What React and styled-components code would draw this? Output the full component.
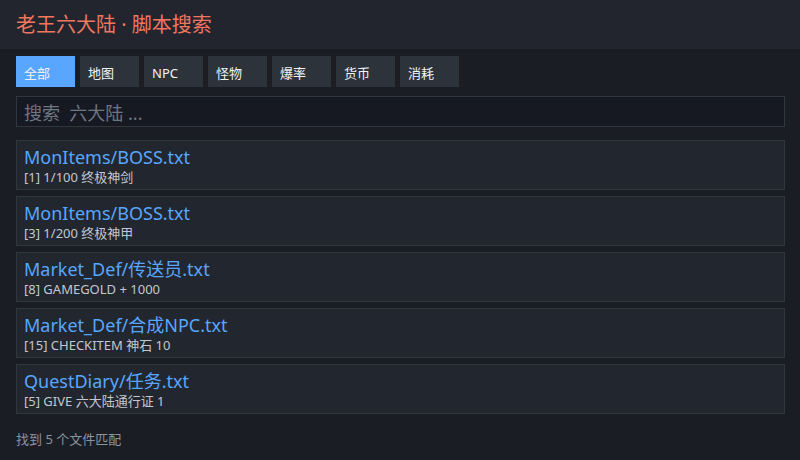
import React, { useState } from 'react';
import styled, { createGlobalStyle } from 'styled-components';

const GlobalStyle = createGlobalStyle`
  html, body {
    margin: 0;
    padding: 0;
    background: #1b1d25;
    font-family: "Noto Sans", "Noto Sans CJK SC", sans-serif;
  }
`;

const tabs = ['全部', '地图', 'NPC', '怪物', '爆率', '货币', '消耗'];

const results = [
  { file: 'MonItems/BOSS.txt', line: '[1] 1/100 终极神剑' },
  { file: 'MonItems/BOSS.txt', line: '[3] 1/200 终极神甲' },
  { file: 'Market_Def/传送员.txt', line: '[8] GAMEGOLD + 1000' },
  { file: 'Market_Def/合成NPC.txt', line: '[15] CHECKITEM 神石 10' },
  { file: 'QuestDiary/任务.txt', line: '[5] GIVE 六大陆通行证 1' },
];

const Page = styled.div`
  width: 800px;
  height: 460px;
  display: flex;
  flex-direction: column;
  background: #1b1d25;
  overflow: hidden;
`;

const Header = styled.header`
  height: 49px;
  display: flex;
  align-items: center;
  padding: 0 16px;
  background: #22252e;
  box-sizing: border-box;
`;

const Title = styled.h1`
  margin: 0;
  font-size: 20px;
  line-height: 24px;
  font-weight: 400;
  color: #f0775e;
`;

const Body = styled.main`
  display: flex;
  flex-direction: column;
  padding: 7px 15px 0 16px;
`;

const TabRow = styled.div`
  display: flex;
  gap: 5px;
`;

const Tab = styled.button`
  width: 59px;
  height: 31px;
  padding: 2px 0 0 8px;
  border: none;
  text-align: left;
  font-family: inherit;
  font-size: 13px;
  color: #f0f3f6;
  background: ${(p) => (p.$active ? '#58a6ff' : '#2d333b')};
  cursor: pointer;
`;

const Search = styled.input`
  margin-top: 9px;
  height: 31px;
  box-sizing: border-box;
  padding: 3px 7px 0;
  border: 1px solid #30363d;
  background: #161922;
  color: #c9d1d9;
  font-family: inherit;
  font-size: 18px;
  outline: none;
  &::placeholder {
    color: #6e7681;
  }
`;

const List = styled.div`
  margin-top: 13px;
  display: flex;
  flex-direction: column;
  gap: 6px;
`;

const Card = styled.div`
  height: 50px;
  box-sizing: border-box;
  padding: 4px 7px 0;
  border: 1px solid #30363d;
  background: #22262e;
  display: flex;
  flex-direction: column;
`;

const FileName = styled.div`
  font-size: 18px;
  line-height: 24px;
  color: #58a6ff;
`;

const Line = styled.div`
  font-size: 13px;
  line-height: 16px;
  color: #c3c8d0;
`;

const Footer = styled.div`
  margin-top: 16px;
  font-size: 13px;
  line-height: 18px;
  color: #8b949e;
`;

export default function App() {
  const [active, setActive] = useState(0);
  const [query, setQuery] = useState('');
  return (
    <>
      <GlobalStyle />
      <Page>
        <Header>
          <Title>老王六大陆 · 脚本搜索</Title>
        </Header>
        <Body>
          <TabRow>
            {tabs.map((t, i) => (
              <Tab key={t} $active={i === active} onClick={() => setActive(i)}>
                {t}
              </Tab>
            ))}
          </TabRow>
          <Search
            value={query}
            onChange={(e) => setQuery(e.target.value)}
            placeholder="搜索  六大陆 ..."
          />
          <List>
            {results.map((r, i) => (
              <Card key={i}>
                <FileName>{r.file}</FileName>
                <Line>{r.line}</Line>
              </Card>
            ))}
          </List>
          <Footer>找到 {results.length} 个文件匹配</Footer>
        </Body>
      </Page>
    </>
  );
}
